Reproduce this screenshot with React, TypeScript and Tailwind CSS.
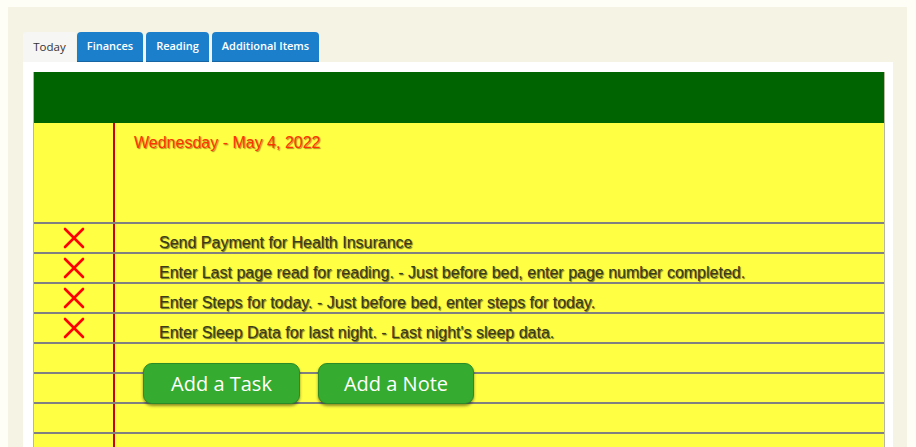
import React from "react";

const tasks = [
  "Send Payment for Health Insurance",
  "Enter Last page read for reading. - Just before bed, enter page number completed.",
  "Enter Steps for today. - Just before bed, enter steps for today.",
  "Enter Sleep Data for last night. - Last night's sleep data.",
];

function XMark() {
  return (
    <svg width="22" height="22" viewBox="0 0 22 22">
      <line x1="2" y1="2" x2="20" y2="20" stroke="#ff0000" strokeWidth="2.6" strokeLinecap="round" />
      <line x1="20" y1="2" x2="2" y2="20" stroke="#ff0000" strokeWidth="2.6" strokeLinecap="round" />
    </svg>
  );
}

function Row({ children, mark }: { children?: React.ReactNode; mark?: boolean }) {
  return (
    <div className="flex h-[30px] border-t-2 border-[#808080]">
      <div className="w-[79px] flex items-center justify-center">{mark ? <XMark /> : null}</div>
      <div className="w-[2px] bg-[#cc0000]" />
      <div className="flex-1 flex items-center pl-[44px] pt-[9px] text-[16px] text-[#3a3a1a] [text-shadow:1px_1px_1px_rgba(0,0,0,0.6)] whitespace-nowrap">
        {children}
      </div>
    </div>
  );
}

export default function App() {
  return (
    <div className="w-[916px] h-[447px] overflow-hidden bg-[#fefef6] pl-[8px] pt-[7px] font-['Liberation_Sans',Arial,sans-serif]">
      <div className="w-[899px] h-[440px] bg-[#f5f3e3] pl-[15px] pt-[25px]">
        <div className="flex items-end gap-[3px] h-[30px] font-['Open_Sans',sans-serif] text-[11px]">
          <div className="h-[30px] w-[53px] flex items-center justify-center bg-[#f6f6f4] text-[#333] rounded-t-[3px] text-[11.5px]">
            Today
          </div>
          <div className="h-[30px] w-[66px] -ml-[2px] flex items-center justify-center bg-[#1b7fcc] text-white font-semibold rounded-t-[4px] border-b border-[#1766a3]">
            Finances
          </div>
          <div className="h-[30px] w-[63px] flex items-center justify-center bg-[#1b7fcc] text-white font-semibold rounded-t-[4px] border-b border-[#1766a3]">
            Reading
          </div>
          <div className="h-[30px] w-[107px] flex items-center justify-center bg-[#1b7fcc] text-white font-semibold rounded-t-[4px] border-b border-[#1766a3]">
            Additional Items
          </div>
        </div>
        <div className="w-[870px] h-[400px] bg-white pl-[10px] pt-[10px]">
          <div className="w-[852px] border-x border-[#b8b8a0] bg-[#ffff44] relative">
            <div className="h-[51px] bg-[#006400]" />
            <div className="flex h-[99px]">
              <div className="w-[79px]" />
              <div className="w-[2px] bg-[#cc0000]" />
              <div className="flex-1 pl-[19px] pt-[8px] text-[16px] text-[#ff3300] [text-shadow:1px_1px_1px_rgba(120,40,0,0.55)]">
                Wednesday - May 4, 2022
              </div>
            </div>
            {tasks.map((t) => (
              <Row key={t} mark>
                {t}
              </Row>
            ))}
            <Row />
            <Row />
            <Row />
            <Row />
            <div className="absolute left-[109px] top-[291px] flex gap-[18px] font-['Open_Sans',sans-serif]">
              <button className="w-[157px] h-[41px] rounded-[9px] bg-[#35ac2f] border border-[#2b8c27] text-white text-[20px] font-medium shadow-[0_2px_3px_rgba(0,0,0,0.45)]">
                Add a Task
              </button>
              <button className="w-[156px] h-[41px] rounded-[9px] bg-[#35ac2f] border border-[#2b8c27] text-white text-[20px] font-medium shadow-[0_2px_3px_rgba(0,0,0,0.45)]">
                Add a Note
              </button>
            </div>
          </div>
        </div>
      </div>
    </div>
  );
}
